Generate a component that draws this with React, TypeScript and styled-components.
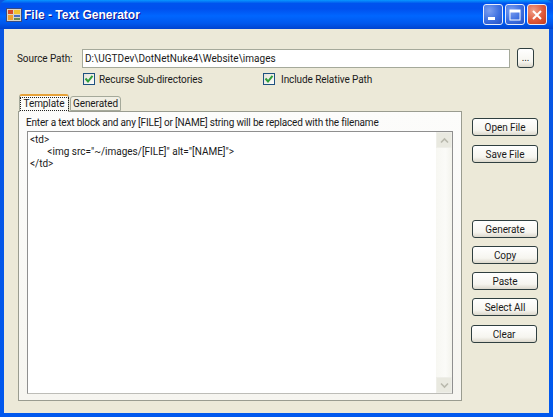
import React from "react";
import styled, { createGlobalStyle } from "styled-components";

const GlobalStyle = createGlobalStyle`
  html, body {
    margin: 0;
    padding: 0;
    width: 553px;
    height: 417px;
    overflow: hidden;
    background: #ece9d8;
  }
  * {
    box-sizing: border-box;
  }
`;

const Window = styled.div`
  width: 553px;
  height: 417px;
  display: flex;
  flex-direction: column;
  background: linear-gradient(180deg, #0a55e0 0%, #0058ee 100%);
  font-family: Roboto, "Liberation Sans", Arial, sans-serif;
  font-size: 10px;
  letter-spacing: -0.08px;
  color: #1a1a1a;
`;

const TitleBar = styled.div`
  height: 29px;
  flex: none;
  display: flex;
  align-items: center;
  padding: 0 5px 0 6px;
  border-radius: 7px 7px 0 0;
  background: linear-gradient(
    180deg,
    #0997ff 0%,
    #0053ee 12%,
    #0050ee 30%,
    #0066ff 55%,
    #0058ee 80%,
    #0043cf 100%
  );
`;

const TitleText = styled.span`
  margin-left: 2px;
  color: #fff;
  font-family: "Liberation Sans", Arial, sans-serif;
  font-weight: 700;
  font-size: 12px;
  letter-spacing: 0;
  text-shadow: 1px 1px 0 #0f1089;
`;

const TitleButtons = styled.div`
  margin-left: auto;
  display: flex;
  gap: 2px;
  padding-right: 1px;
`;

const TitleButton = styled.div<{ $close?: boolean }>`
  width: 20px;
  height: 21px;
  display: flex;
  align-items: center;
  justify-content: center;
  border: 1px solid #e8eefc;
  border-radius: 3px;
  background: ${(p) =>
    p.$close
      ? "radial-gradient(circle at 30% 30%, #f0a08a 0%, #e0593a 55%, #c23a1a 100%)"
      : "radial-gradient(circle at 30% 30%, #7d9fef 0%, #3d6fe0 55%, #2450c4 100%)"};
`;

const Body = styled.div`
  flex: 1;
  margin: 0 4px 4px;
  background: #ece9d8;
  display: flex;
  flex-direction: column;
  padding: 19px 15px 0 13px;
  min-height: 0;
`;

const PathRow = styled.div`
  display: flex;
  align-items: center;
  height: 20px;
`;

const PathLabel = styled.label`
  width: 65px;
  flex: none;
`;

const PathInput = styled.div`
  width: 428px;
  height: 19px;
  flex: none;
  border: 1px solid #a5a99a;
  background: #fff;
  padding: 0 2px;
  line-height: 17px;
  letter-spacing: 0.03px;
`;

const BaseButton = styled.button`
  font-family: inherit;
  font-size: 10px;
  letter-spacing: inherit;
  color: #1a1a1a;
  padding: 0;
  border: 1px solid #2f3f40;
  border-radius: 3px;
  background: linear-gradient(180deg, #ffffff 0%, #f6f5ef 70%, #dcd8cc 100%);
`;

const BrowseButton = styled(BaseButton)`
  width: 21px;
  height: 20px;
  margin-left: 7px;
  line-height: 16px;
`;

const CheckRow = styled.div`
  display: flex;
  margin: 4px 0 0 66px;
  height: 14px;
  align-items: center;
`;

const CheckItem = styled.div<{ $width: number; $gap: number }>`
  width: ${(p) => p.$width}px;
  display: flex;
  align-items: center;
  gap: ${(p) => p.$gap}px;
`;

const CheckBox = styled.span`
  width: 12px;
  height: 12px;
  flex: none;
  display: flex;
  align-items: center;
  justify-content: center;
  border: 1px solid #1e5180;
  background: linear-gradient(135deg, #e4e2d8 0%, #fbfbf9 100%);
`;

const Main = styled.div`
  flex: 1;
  display: flex;
  margin-top: 8px;
  min-height: 0;
`;

const TabArea = styled.div`
  width: 444px;
  height: 307px;
  flex: none;
  display: flex;
  flex-direction: column;
  margin-left: 1px;
`;

const TabStrip = styled.div`
  height: 17px;
  flex: none;
  display: flex;
  align-items: flex-end;
  position: relative;
  z-index: 1;
  padding-left: 1px;
  gap: 1px;
`;

const Tab = styled.div<{ $active?: boolean }>`
  height: ${(p) => (p.$active ? 18 : 15)}px;
  width: ${(p) => (p.$active ? 50 : 51)}px;
  margin-bottom: ${(p) => (p.$active ? -1 : 0)}px;
  display: flex;
  align-items: center;
  justify-content: center;
  background: ${(p) => (p.$active ? "#fbfbf8" : "#f1efe4")};
  border: 1px solid #a5a99a;
  border-bottom: ${(p) => (p.$active ? "none" : "1px solid #a5a99a")};
  border-top: ${(p) => (p.$active ? "2px solid #e6a23a" : "1px solid #a5a99a")};
  border-radius: 3px 3px 0 0;
`;

const TabFocus = styled.span`
  border: 1px dotted #222;
  padding: 0 3px;
  line-height: 12px;
`;

const TabPanel = styled.div`
  flex: 1;
  display: flex;
  flex-direction: column;
  padding: 4px 8px 6px;
  background: linear-gradient(180deg, #fcfcfb 0%, #f6f5f0 100%);
  border: 1px solid #9a9c90;
  min-height: 0;
`;

const Prompt = styled.div`
  height: 15px;
  line-height: 14px;
  flex: none;
  margin-left: -1px;
  letter-spacing: -0.17px;
`;

const EditorBox = styled.div`
  flex: 1;
  display: flex;
  background: #fff;
  border: 1px solid #8f8f8f;
  border-bottom-color: #bdbdb8;
  min-height: 0;
`;

const Code = styled.pre`
  flex: 1;
  margin: 0;
  padding: 2px;
  font-family: inherit;
  font-size: 10px;
  line-height: 12px;
  letter-spacing: 0;
`;

const Scrollbar = styled.div`
  width: 16px;
  flex: none;
  display: flex;
  flex-direction: column;
  justify-content: space-between;
  background: linear-gradient(90deg, #f7f7f2 0%, #fbfbf8 60%, #f3f3ec 100%);
`;

const ScrollArrow = styled.div`
  height: 16px;
  display: flex;
  align-items: center;
  justify-content: center;
  background: #e9e9e0;
  border: 1px solid #eeeee8;
`;

const ButtonColumn = styled.div`
  flex: 1;
  display: flex;
  flex-direction: column;
  align-items: flex-start;
  padding: 24px 0 0 10px;
`;

const ActionButton = styled(BaseButton)<{ $gapTop?: number; $shift?: number }>`
  width: 66px;
  height: 18px;
  flex: none;
  line-height: 15px;
  margin-top: ${(p) => p.$gapTop ?? 8}px;
  margin-left: ${(p) => p.$shift ?? 0}px;
`;

const Tick = () => (
  <svg width="10" height="10" viewBox="0 0 10 10">
    <path d="M1.5 4.5 L4 7.5 L8.5 1.8" fill="none" stroke="#2f9e3a" strokeWidth="2" />
  </svg>
);

const Chevron = ({ up }: { up?: boolean }) => (
  <svg width="9" height="7" viewBox="0 0 9 7">
    <path
      d={up ? "M1 5.5 L4.5 2 L8 5.5" : "M1 1.5 L4.5 5 L8 1.5"}
      fill="none"
      stroke="#b9b9ad"
      strokeWidth="1.6"
    />
  </svg>
);

const AppIcon = () => (
  <svg width="16" height="16" viewBox="0 0 16 16">
    <rect x="0.5" y="1.5" width="15" height="13" fill="#d9d5c8" stroke="#3a4a80" />
    <rect x="2" y="3" width="5" height="4" fill="#d94a2a" />
    <rect x="8" y="3" width="6" height="4" fill="#f2c230" />
    <rect x="2" y="8" width="5" height="5" fill="#f0a030" />
    <rect x="8" y="8" width="6" height="2" fill="#4a6cc0" />
    <rect x="8" y="11" width="6" height="2" fill="#6a8a50" />
  </svg>
);

const App = () => (
  <>
    <GlobalStyle />
    <Window>
      <TitleBar>
        <AppIcon />
        <TitleText>File - Text Generator</TitleText>
        <TitleButtons>
          <TitleButton>
            <svg width="12" height="12" viewBox="0 0 12 12">
              <rect x="1" y="8" width="7" height="3" fill="#fff" />
            </svg>
          </TitleButton>
          <TitleButton>
            <svg width="12" height="12" viewBox="0 0 12 12">
              <rect x="1" y="1" width="10" height="10" fill="none" stroke="#fff" />
              <rect x="1" y="1" width="10" height="2.5" fill="#fff" />
            </svg>
          </TitleButton>
          <TitleButton $close>
            <svg width="12" height="12" viewBox="0 0 12 12">
              <path d="M2 2 L10 10 M10 2 L2 10" stroke="#fff" strokeWidth="2" />
            </svg>
          </TitleButton>
        </TitleButtons>
      </TitleBar>
      <Body>
        <PathRow>
          <PathLabel>Source Path:</PathLabel>
          <PathInput>D:\UGTDev\DotNetNuke4\Website\images</PathInput>
          <BrowseButton>...</BrowseButton>
        </PathRow>
        <CheckRow>
          <CheckItem $width={180} $gap={4}>
            <CheckBox>
              <Tick />
            </CheckBox>
            Recurse Sub-directories
          </CheckItem>
          <CheckItem $width={160} $gap={6}>
            <CheckBox>
              <Tick />
            </CheckBox>
            Include Relative Path
          </CheckItem>
        </CheckRow>
        <Main>
          <TabArea>
            <TabStrip>
              <Tab $active>
                <TabFocus>Template</TabFocus>
              </Tab>
              <Tab>Generated</Tab>
            </TabStrip>
            <TabPanel>
              <Prompt>Enter a text block and any [FILE] or [NAME] string will be replaced with the filename</Prompt>
              <EditorBox>
                <Code>{`<td>
       <img src="~/images/[FILE]" alt="[NAME]">
</td>`}</Code>
                <Scrollbar>
                  <ScrollArrow>
                    <Chevron up />
                  </ScrollArrow>
                  <ScrollArrow>
                    <Chevron />
                  </ScrollArrow>
                </Scrollbar>
              </EditorBox>
            </TabPanel>
          </TabArea>
          <ButtonColumn>
            <ActionButton $gapTop={0}>Open File</ActionButton>
            <ActionButton $gapTop={9}>Save File</ActionButton>
            <ActionButton $gapTop={57}>Generate</ActionButton>
            <ActionButton>Copy</ActionButton>
            <ActionButton>Paste</ActionButton>
            <ActionButton>Select All</ActionButton>
            <ActionButton $gapTop={9} $shift={-1}>
              Clear
            </ActionButton>
          </ButtonColumn>
        </Main>
      </Body>
    </Window>
  </>
);

export default App;
